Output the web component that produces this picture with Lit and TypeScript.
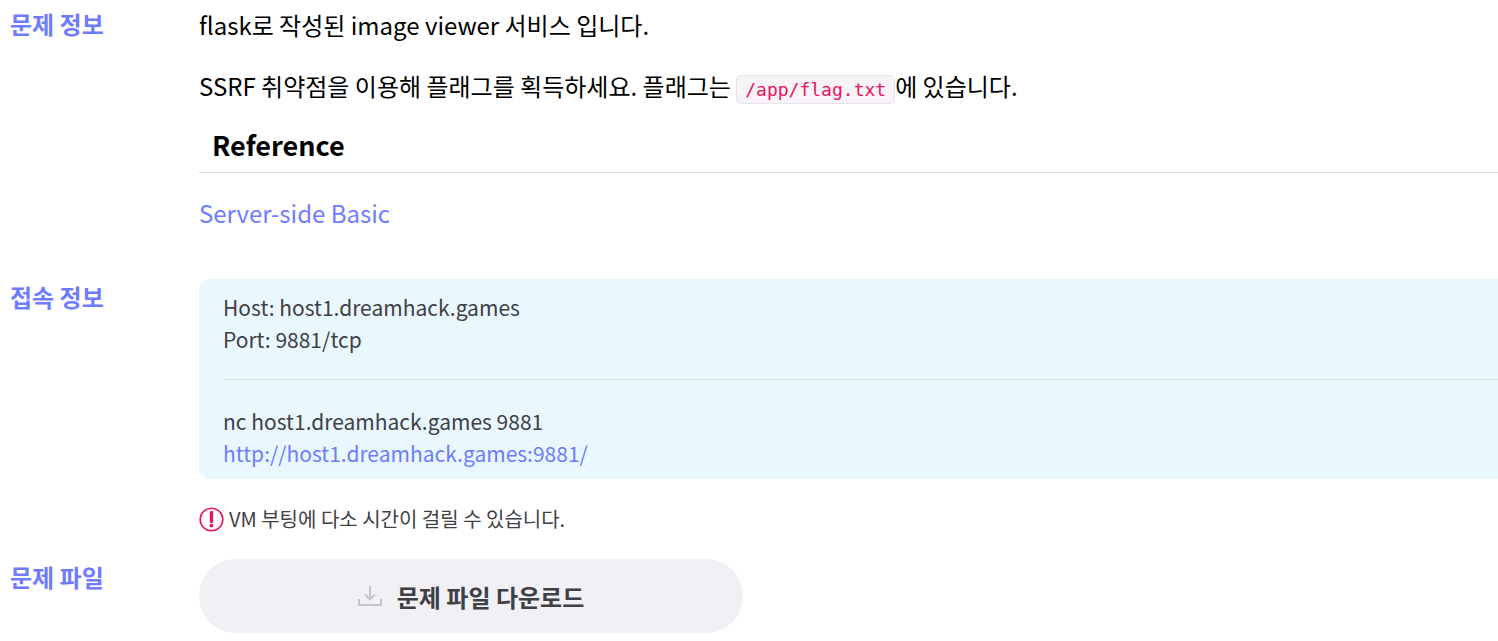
import { LitElement, html, css } from 'lit';
import { customElement } from 'lit/decorators.js';

@customElement('app-root')
export class AppRoot extends LitElement {
  static styles = css`
    :host {
      display: block;
      width: 1498px;
      height: 641px;
      overflow: hidden;
      background: #fff;
      font-family: "Noto Sans CJK KR", "Noto Sans", sans-serif;
      color: #000;
    }
    .section {
      display: grid;
      grid-template-columns: 199px 1400px;
    }
    .label {
      padding-left: 10px;
      font-size: 24px;
      line-height: 36px;
      font-weight: 700;
      color: #6f7cff;
    }
    .info { height: 279px; padding-top: 6px; box-sizing: border-box; }
    .label.first { margin-top: 0; }
    .desc p {
      margin: 0 0 0 0;
      font-size: 24px;
      line-height: 38px;
    }
    .line1 { margin-bottom: 23px !important; }
    code {
      font-family: "DejaVu Sans Mono", monospace;
      font-size: 18px;
      color: #e6145f;
      background: #f8f3f6;
      border: 1px solid #e4e4ee;
      border-radius: 5px;
      padding: 3px 8px;
    }
    h4 {
      margin: 0;
      padding: 16px 13px 7px;
      font-size: 27px;
      line-height: 40px;
      font-weight: 700;
      border-bottom: 1px solid #dcdde3;
    }
    a { color: #6f7cff; text-decoration: none; }
    .ref { display: block; margin-top: 21px; font-size: 24px; line-height: 38px; }
    .box {
      background: #e9f7ff;
      border-radius: 12px;
      padding: 12px 24px 10px;
      font-size: 21px;
      line-height: 32px;
      color: #3e4046;
    }
    .box hr {
      border: 0;
      border-top: 1px solid #d3dfe8;
      margin: 24px 0 25px;
    }
    .note {
      display: flex;
      align-items: center;
      gap: 5px;
      margin-top: 24px;
      font-size: 20px;
      line-height: 32px;
      color: #3e4046;
    }
    .note svg { display: block; }
    .file { margin-top: 24px; }
    .button {
      display: flex;
      align-items: center;
      justify-content: center;
      gap: 15px;
      width: 544px;
      height: 74px;
      border-radius: 37px;
      background: #f0f0f5;
      font-size: 24px;
      font-weight: 700;
      color: #3e4046;
    }
  `;

  render() {
    return html`
      <div class="section info">
        <div class="label first">문제 정보</div>
        <div class="desc">
          <p class="line1">flask로 작성된 image viewer 서비스 입니다.</p>
          <p>SSRF 취약점을 이용해 플래그를 획득하세요. 플래그는 <code>/app/flag.txt</code>에 있습니다.</p>
          <h4>Reference</h4>
          <a class="ref" href="#">Server-side Basic</a>
        </div>
      </div>
      <div class="section">
        <div class="label">접속 정보</div>
        <div>
          <div class="box">
            Host: host1.dreamhack.games<br />
            Port: 9881/tcp
            <hr />
            nc host1.dreamhack.games 9881<br />
            <a href="#">http://host1.dreamhack.games:9881/</a>
          </div>
          <div class="note">
            <svg width="25" height="25" viewBox="0 0 25 25">
              <circle cx="12.5" cy="12.5" r="11.3" fill="none" stroke="#e6145f" stroke-width="1.6" />
              <path d="M12.5 5.5v9" stroke="#e6145f" stroke-width="3.4" stroke-linecap="round" />
              <circle cx="12.5" cy="18.6" r="1.9" fill="#e6145f" />
            </svg>
            VM 부팅에 다소 시간이 걸릴 수 있습니다.
          </div>
        </div>
      </div>
      <div class="section file">
        <div class="label">문제 파일</div>
        <div class="button">
          <svg width="24" height="22" viewBox="0 0 24 22" fill="none" stroke="#c5c6cc" stroke-width="2">
            <path d="M12 1v13M7 9.5l5 5 5-5" />
            <path d="M1 14v6h22v-6" />
          </svg>
          문제 파일 다운로드
        </div>
      </div>
    `;
  }
}
